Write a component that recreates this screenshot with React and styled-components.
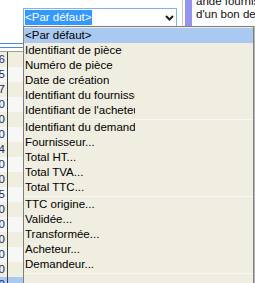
import React from "react";
import styled, { createGlobalStyle } from "styled-components";

const GlobalStyle = createGlobalStyle`
  html, body { margin: 0; padding: 0; background: #fff; }
`;

const Page = styled.div`
  position: relative;
  width: 255px;
  height: 283px;
  overflow: hidden;
  background: #fff;
  font-family: "Liberation Sans", Arial, sans-serif;
  font-size: 11.5px;
  color: #000;
`;

const TopBar = styled.div`
  display: flex;
  align-items: flex-start;
  height: 26px;
`;

const LeftGap = styled.div`
  width: 23px;
  flex: none;
`;

const SelectBox = styled.div`
  box-sizing: border-box;
  flex: none;
  margin-top: 8px;
  width: 154px;
  height: 19px;
  border: 1px solid #7eb4ea;
  background: #fff;
  display: flex;
  align-items: center;
  justify-content: space-between;
  padding: 0 2px 0 1px;
`;

const SelectedText = styled.span`
  display: block;
  height: 15px;
  line-height: 15px;
  background: #3399ff;
  color: #fff;
  white-space: nowrap;
`;

const Chevron = styled.svg`
  display: block;
  flex: none;
`;

const Divider = styled.div`
  flex: none;
  width: 1px;
  height: 26px;
  margin-left: 5px;
  background: #c3cad4;
`;

const PurpleBar = styled.div`
  flex: none;
  width: 7px;
  height: 26px;
  margin-left: 2px;
  background: #9494ee;
`;

const SideText = styled.div`
  flex: 1;
  min-width: 0;
  margin-left: 4px;
  margin-top: -5px;
  line-height: 13px;
  white-space: nowrap;
  overflow: hidden;
  color: #111;
`;

const TableHead = styled.div`
  box-sizing: border-box;
  margin-top: 17px;
  height: 9px;
  border-top: 1px solid #4a8ad6;
  border-bottom: 1px solid #a0a0a0;
  padding-top: 3px;
`;

const HeadLine = styled.div`
  height: 1px;
  background: #4a8ad6;
`;

const Row = styled.div`
  display: flex;
  height: 15px;
  background: ${(p) => (p.$selected ? "#aac9f0" : p.$alt ? "#efeedf" : "#f7f7f5")};
`;

const NumCell = styled.div`
  box-sizing: border-box;
  flex: none;
  width: 8px;
  display: flex;
  justify-content: flex-end;
  padding-right: 2px;
  border-right: 1px solid #404040;
  line-height: 15px;
  overflow: hidden;
  white-space: nowrap;
  color: #1c2a6e;
`;

const NumText = styled.span`
  flex: none;
`;

const Dropdown = styled.div`
  position: absolute;
  left: 23px;
  top: 26px;
  width: 231px;
  height: 280px;
  box-sizing: border-box;
  border: 1px solid #7f7f7f;
  background: #efeee0;
  padding-top: 1px;
  box-shadow: 1px 0 0 #b5b5b5;
`;

const Item = styled.div`
  height: 15px;
  line-height: 15px;
  padding-left: 1px;
  white-space: nowrap;
  background: ${(p) => (p.$active ? "#aac9f0" : "transparent")};
`;

const Label = styled.span`
  display: inline-block;
  vertical-align: top;
  max-width: 110px;
  overflow: hidden;
`;

const Separator = styled.div`
  box-sizing: border-box;
  height: 2px;
  border-bottom: 1px solid #f8f8f2;
`;

const groups = [
  [
    "<Par défaut>",
    "Identifiant de pièce",
    "Numéro de pièce",
    "Date de création",
    "Identifiant du fournisseur",
    "Identifiant de l'acheteur",
  ],
  [
    "Identifiant du demandeur",
    "Fournisseur...",
    "Total HT...",
    "Total TVA...",
    "Total TTC...",
  ],
  ["TTC origine...", "Validée...", "Transformée...", "Acheteur...", "Demandeur..."],
];

const digits = ["16", "25", "17", "10", "20", "30", "14", "20", "10", "15", "30", "10", "20", "10", "20", "10"];

export default function App() {
  return (
    <>
      <GlobalStyle />
      <Page>
        <TopBar>
          <LeftGap />
          <SelectBox>
            <SelectedText>&lt;Par défaut&gt;</SelectedText>
            <Chevron width="9" height="6" viewBox="0 0 9 6">
              <polyline points="1,1 4.5,4.5 8,1" fill="none" stroke="#1e1e1e" strokeWidth="2" />
            </Chevron>
          </SelectBox>
          <Divider />
          <PurpleBar />
          <SideText>
            ande fournisseur
            <br />
            d'un bon de commande
          </SideText>
        </TopBar>
        <TableHead>
          <HeadLine />
        </TableHead>
        {digits.map((d, i) => (
          <Row key={i} $alt={i % 2 === 0} $selected={i === 15}>
            <NumCell>
              <NumText>{d}</NumText>
            </NumCell>
          </Row>
        ))}
        <Dropdown>
          {groups.map((g, gi) => (
            <React.Fragment key={gi}>
              {g.map((t, ti) => (
                <Item key={t} $active={gi === 0 && ti === 0}>
                  <Label>{t}</Label>
                </Item>
              ))}
              <Separator />
            </React.Fragment>
          ))}
        </Dropdown>
      </Page>
    </>
  );
}
